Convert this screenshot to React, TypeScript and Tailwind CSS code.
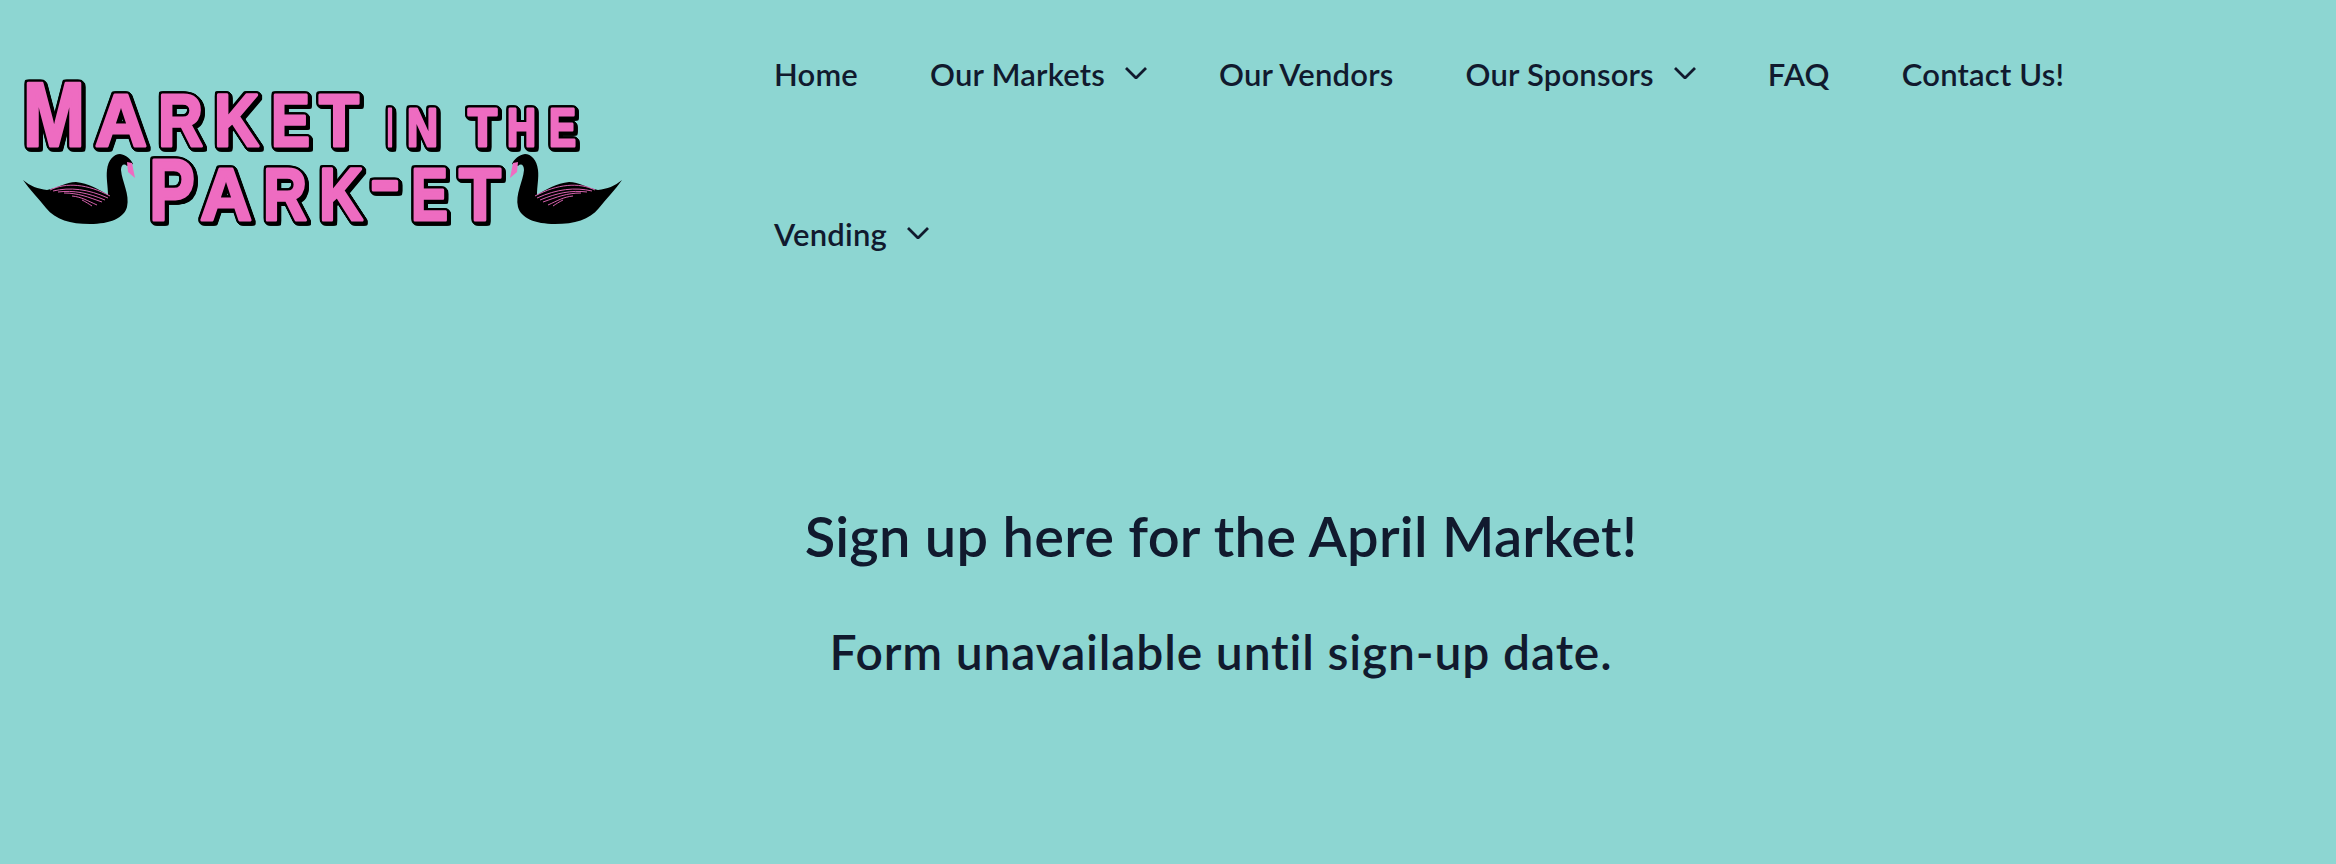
import React from "react";

const letters: [string, number, number, number, number][] = [
  // char, x, baseline, width, font size
  ["M", 23, 146, 62, 90],
  ["A", 95, 146, 52, 75],
  ["R", 158, 146, 45, 75],
  ["K", 214, 146, 45, 75],
  ["E", 271, 146, 39, 75],
  ["T", 319, 146, 40, 75],
  ["I", 387, 146, 6, 54],
  ["N", 407, 146, 31, 54],
  ["T", 468, 146, 29, 54],
  ["H", 507, 146, 29, 54],
  ["E", 549, 146, 27, 54],
  ["P", 149, 220, 46, 88],
  ["A", 200, 220, 52, 75],
  ["R", 263, 220, 44, 75],
  ["K", 319, 220, 44, 75],
  ["-", 370, 205, 30, 75],
  ["E", 411, 220, 37, 75],
  ["T", 459, 220, 42, 75],
];

function Swan({ flip }: { flip?: boolean }) {
  return (
    <g transform={flip ? "translate(645 0) scale(-1 1)" : undefined}>
      <path
        d="M23 180 C30 186 38 189 47 190 C58 188 66 182 76 182 C88 183 100 190 108 195 C108 186 106 178 107 170 C108 160 114 154 120 154 C126 155 131 159 133 164 L127 166 C124 163 121 165 121 170 C122 182 130 194 127 207 C124 218 110 224 90 224 C70 224 56 220 46 208 C38 198 30 190 23 180 Z"
        fill="#000000"
      />
      <path d="M127 162 L132 163 L135 178 L128 172 Z" fill="#ee6cc1" />
      <g fill="none" stroke="#ee6cc1" strokeWidth="0.9">
        <path d="M50 190 C66 182 88 184 110 196" />
        <path d="M53 191 C70 187 88 189 108 198" />
        <path d="M58 192 C74 190 88 193 105 200" />
        <path d="M64 193 C78 193 88 197 102 202" />
        <path d="M72 196 C82 197 88 201 97 205" />
        <path d="M82 200 C86 202 89 204 92 206" />
      </g>
    </g>
  );
}

function Logo() {
  return (
    <svg viewBox="0 0 644 240" className="w-[644px] h-[240px] shrink-0" fontFamily="'Liberation Sans', sans-serif" fontWeight="700">
      <g className="[filter:drop-shadow(1.2px_0_0_#000)_drop-shadow(-1.2px_0_0_#000)_drop-shadow(0_1.2px_0_#000)_drop-shadow(0_-1.2px_0_#000)_drop-shadow(1.5px_1.5px_0_#000)_drop-shadow(1.5px_1.5px_0_#000)_drop-shadow(1.5px_1.5px_0_#000)]">
        {letters.map(([c, x, y, w, s], i) => (
          <text key={i} x={x} y={y} fontSize={s} textLength={w} lengthAdjust="spacingAndGlyphs" fill="#ee6cc1" stroke="#ee6cc1" strokeWidth="3" strokeLinejoin="round">
            {c}
          </text>
        ))}
      </g>
      <Swan />
      <Swan flip />
    </svg>
  );
}

function NavItem({ label, caret }: { label: string; caret?: boolean }) {
  return (
    <a className="flex items-center gap-5 h-[160px] mr-[72px] whitespace-nowrap">
      <span>{label}</span>
      {caret && (
        <svg viewBox="0 0 22 12" className="w-[22px] h-3 mt-[-2px]" fill="none" stroke="currentColor" strokeWidth="2.8">
          <path d="M1 1 L11 11 L21 1" />
        </svg>
      )}
    </a>
  );
}

export default function App() {
  return (
    <div className="min-h-screen bg-[#8dd6d2] text-[#111a2e] font-['Lato',sans-serif] overflow-hidden">
      <header className="flex h-[320px]">
        <Logo />
        <nav className="flex flex-wrap content-start ml-[130px] w-[1400px] text-[31px] font-semibold mt-[-6px] tracking-[0.2px]">
          <NavItem label="Home" />
          <NavItem label="Our Markets" caret />
          <NavItem label="Our Vendors" />
          <NavItem label="Our Sponsors" caret />
          <NavItem label="FAQ" />
          <NavItem label="Contact Us!" />
          <NavItem label="Vending" caret />
        </nav>
      </header>
      <main className="flex flex-col items-center pl-[106px] pt-[181px]">
        <h1 className="text-[56px] leading-[70px] font-semibold tracking-[0.25px]">Sign up here for the April Market!</h1>
        <h2 className="text-[48px] leading-[60px] font-semibold mt-[51px] tracking-[0.85px]">Form unavailable until sign-up date.</h2>
      </main>
    </div>
  );
}
